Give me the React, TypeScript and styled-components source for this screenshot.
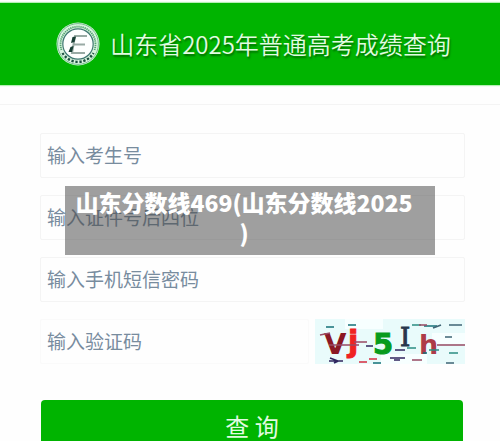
import React from 'react';
import styled, { createGlobalStyle } from 'styled-components';

const GlobalStyle = createGlobalStyle`
  * { box-sizing: border-box; }
  body {
    margin: 0;
    background: #fefefe;
    font-family: "Noto Sans CJK SC", sans-serif;
  }
`;

const Page = styled.div`
  position: relative;
  min-height: 100vh;
  padding-top: 3px;
`;

const Header = styled.header`
  display: flex;
  align-items: center;
  justify-content: center;
  gap: 10px;
  height: 82px;
  padding-left: 7px;
  background: #00b400;
  box-shadow: 0 0 1px 1px #b4efb4;
`;

const Title = styled.h1`
  margin: 0;
  font-size: 24px;
  line-height: 32px;
  font-weight: 350;
  white-space: nowrap;
  color: #e2fbe2;
  text-shadow: 1px 2px 2px #006b00;
`;

const Divider = styled.hr`
  margin: 19px 0 0;
  border: 0;
  border-top: 1px solid #f4f4f4;
`;

const Form = styled.form`
  display: flex;
  flex-direction: column;
  gap: 17px;
  padding: 28px 35px 0 40px;
`;

const Row = styled.div`
  display: flex;
  align-items: center;
  gap: 6px;
`;

const Field = styled.input<{ $faint?: boolean }>`
  flex: 1;
  min-width: 0;
  height: 45px;
  padding: 0 6px 2px;
  border: 1px solid ${(p) => (p.$faint ? '#fafafa' : '#f4f4f4')};
  border-radius: 2px;
  background: #fefefe;
  font: 400 19px "Noto Sans CJK SC", sans-serif;
  color: #50677a;
  outline: none;
  &::placeholder { color: #788c9e; opacity: 1; }
`;

const Submit = styled.button`
  height: 52px;
  margin: 19px 2px 0 1px;
  padding: 0;
  border: 0;
  border-radius: 4px;
  background: #00b400;
  color: #e2fbe2;
  font: 400 24px/24px "Noto Sans CJK SC", sans-serif;
`;

const Caption = styled.div`
  position: absolute;
  top: 186px;
  left: 13%;
  width: 74%;
  padding: 1px 22px 8px 10px;
  background: rgba(70, 70, 70, 0.52);
  color: #fff;
  font-size: 23px;
  line-height: 30px;
  font-weight: 900;
  text-align: center;
  line-break: anywhere;
`;

const Logo = () => (
  <svg width="44" height="44" viewBox="0 0 44 44" aria-hidden="true">
    <circle cx="22" cy="22" r="21.5" fill="#d9f4df" />
    <circle cx="22" cy="22" r="20.4" fill="none" stroke="#4aa568" strokeWidth="0.7" />
    <path d="M5.5 28 A17.5 17.5 0 1 1 38.5 28" fill="none" stroke="#54a472" strokeWidth="1.8" strokeDasharray="1.3 0.8" />
    <path d="M6.5 31 A18 18 0 0 0 37.5 31" fill="none" stroke="#1c5040" strokeWidth="2.4" strokeDasharray="2.3 1.7" />
    <circle cx="22" cy="22" r="15.2" fill="#fdfffe" stroke="#3d7770" strokeWidth="1.2" />
    <path d="M31 14 H19 L16 31 H29 M17.5 22.5 H29" fill="none" stroke="#98aaa4" strokeWidth="2" />
    <path d="M16.5 15 L20 14.5 L18.5 20 L15 21 Z M14.5 25 L17.5 24 L16 30 L12.5 30 Z" fill="#173e34" />
  </svg>
);

const Captcha = () => (
  <svg width="150" height="45" viewBox="0 0 150 45" role="img" aria-label="验证码">
    <rect width="150" height="45" fill="#e9fbfb" />
    <path d="M30 0 H68 V10 H30 Z M66 35 H112 V45 H66 Z M117 14 H150 V25 H117 Z" fill="#f7ffff" />
    <g fontFamily="DejaVu Sans" fontWeight="700">
      <text x="9" y="35" fontSize="29" fill="#8b1824">V</text>
      <text x="33" y="33" fontSize="30" fill="#f02222" stroke="#f02222">j</text>
      <text x="58" y="35" fontSize="29" fill="#079b1d" stroke="#079b1d">5</text>
      <text x="85" y="27" fontSize="26" fontWeight="400" fontFamily="DejaVu Serif" stroke="#26374c" fill="#26374c">I</text>
      <text x="104" y="35" fontSize="27" fill="#ad3b48">h</text>
    </g>
    <g fill="none" strokeWidth="1.7">
      <path d="M11 8 h8 M33 6 h8 M109 7 h13 M58 44 h8 M108 34 L112 34" stroke="#147178" />
      <path d="M97 6 h9 M134 34 h9 M92 29 h9 M114 31 h10" stroke="#2b8d83" />
      <path d="M118 9 L126 6 M134 6 h13 M130 18 h7 M131 44 h8" stroke="#3f6575" />
      <path d="M5 16 L15 14 M14 26 h30 M39 23 h13 M104 6 h8 M122 26 h28 M97 41 h10" stroke="#984b64" />
      <path d="M51 27 h7 M75 39 h15 M79 41 h6 M14 42 L28 42 M15 39 L23 42 L19 44 M80 31 h10" stroke="#30265f" />
      <path d="M44 43 h8 M54 40 h8" stroke="#d52d40" />
    </g>
  </svg>
);

export default function App() {
  return (
    <>
      <GlobalStyle />
      <Page>
        <Header>
          <Logo />
          <Title>山东省2025年普通高考成绩查询</Title>
        </Header>
        <Divider />
        <Form onSubmit={(e) => e.preventDefault()}>
          <Row><Field aria-label="考生号" placeholder="输入考生号" /></Row>
          <Row><Field aria-label="证件号后四位" placeholder="输入证件号后四位" /></Row>
          <Row><Field aria-label="手机短信密码" placeholder="输入手机短信密码" /></Row>
          <Row>
            <Field $faint aria-label="验证码" placeholder="输入验证码" />
            <Captcha />
          </Row>
          <Submit type="submit">查 询</Submit>
        </Form>
        <Caption>山东分数线469(山东分数线2025)</Caption>
      </Page>
    </>
  );
}
